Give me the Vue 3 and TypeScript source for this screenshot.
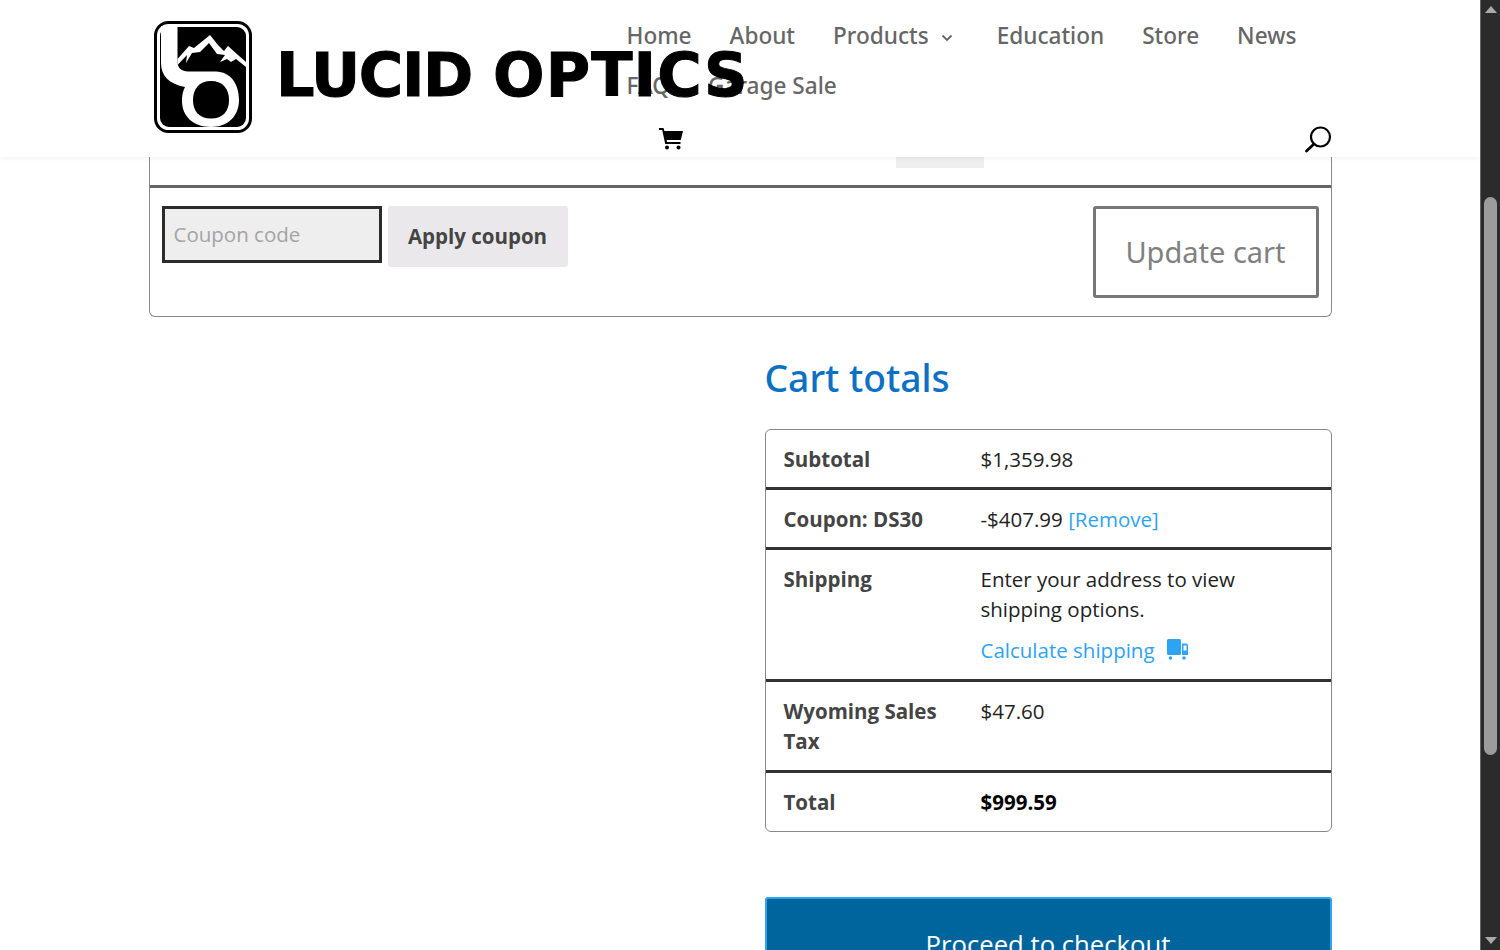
<script setup lang="ts">
const navRows = [
  [
    { label: 'Home', caret: false },
    { label: 'About', caret: false },
    { label: 'Products', caret: true },
    { label: 'Education', caret: false },
    { label: 'Store', caret: false },
    { label: 'News', caret: false },
  ],
  [
    { label: 'FAQ', caret: false },
    { label: 'Garage Sale', caret: false },
  ],
]
</script>

<template>
  <div class="page">
    <div class="viewport">
      <header class="site-header">
        <div class="header-inner">
          <div class="logo">
            <svg class="logo-mark" width="98" height="112" viewBox="0 0 98 112">
              <rect x="1.5" y="1.5" width="95" height="109" rx="13" fill="#fff" stroke="#000" stroke-width="3" />
              <rect x="6" y="6" width="86" height="100" rx="9" fill="#000" />
              <!-- stem running into the ring -->
              <path d="M7 5 H23.5 V41 C23.5 47 28 50.5 34 50.5 H62 C76 51 85 62 85 79 C85 95 74 106 57 106 C39 106 28 95 28 80 C28 73 29.5 69 31 66 C15 63 7 55 7 42 Z" fill="#fff" />
              <path d="M57 60 C69 60 75 68 75 79 C75 90 69 97.5 57 97.5 C45 97.5 39 90 39 79 C39 68 45 60 57 60 Z" fill="#000" />
              <!-- mountains -->
              <path d="M23.5 38 L35 25 L40 27 L56 14 L64 24 L70 30 L74 25 L84 34 L92 41 V46 L82 38 L77 41 L73 38 L66 41 L71 34 L63 33 L55 22 L46 31 L38 32 L32 42 L33 34 L23.5 44 Z" fill="#fff" />
            </svg>
            <span class="logo-text"><span class="word-a">LUCID</span> <span class="word-b">OPTICS</span></span>
          </div>
          <nav class="nav">
            <ul v-for="(row, r) in navRows" :key="r" class="nav-row">
              <li v-for="item in row" :key="item.label" class="nav-item">
                {{ item.label }}
                <svg v-if="item.caret" class="caret" width="12" height="8" viewBox="0 0 12 8">
                  <path d="M1.5 1.5 L6 6 L10.5 1.5" fill="none" stroke="#666" stroke-width="1.8" />
                </svg>
              </li>
            </ul>
          </nav>
          <div class="tools">
            <svg class="cart-icon" width="24" height="22" viewBox="0 0 24 22">
              <path d="M0 0 H4.5 L5.4 3 H24 L21.8 12 H7.6 L8 14 H21.5 V16 H6.2 L3.2 2 H0 Z" fill="#000" />
              <circle cx="8" cy="19.6" r="2" fill="#000" />
              <circle cx="19.5" cy="19.6" r="2" fill="#000" />
            </svg>
            <svg class="search-icon" width="28" height="28" viewBox="0 0 28 28">
              <circle cx="16.5" cy="12" r="9.5" fill="none" stroke="#000" stroke-width="2.2" />
              <path d="M10 19 L2.5 26" fill="none" stroke="#000" stroke-width="2.8" stroke-linecap="round" />
            </svg>
          </div>
        </div>
      </header>

      <main class="content">
        <section class="cart-card">
          <div class="item-row"><div class="qty-stub"></div></div>
          <div class="actions-row">
            <div class="coupon">
              <div class="coupon-input">Coupon code</div>
              <button class="apply-btn">Apply coupon</button>
            </div>
            <button class="update-btn">Update cart</button>
          </div>
        </section>

        <section class="totals">
          <h2 class="totals-title">Cart totals</h2>
          <table class="totals-table">
            <tbody>
              <tr>
                <th>Subtotal</th>
                <td>$1,359.98</td>
              </tr>
              <tr>
                <th>Coupon: DS30</th>
                <td>-$407.99 <a class="link">[Remove]</a></td>
              </tr>
              <tr class="ship-row">
                <th>Shipping</th>
                <td>
                  <p class="ship-text">Enter your address to view shipping options.</p>
                  <a class="link calc">
                    Calculate shipping
                    <svg width="21" height="22" viewBox="0 0 21 22">
                      <rect x="0" y="0" width="14" height="16" rx="1.5" fill="#2ea3f2" />
                      <path d="M15 4.5 H19 Q21 4.5 21 6.5 V16 H15 Z M16.5 6.5 V11.5 H19.5 V6.5 Z" fill="#2ea3f2" fill-rule="evenodd" />
                      <circle cx="3.5" cy="19" r="1.8" fill="#2ea3f2" />
                      <circle cx="17" cy="19" r="1.8" fill="#2ea3f2" />
                    </svg>
                  </a>
                </td>
              </tr>
              <tr class="tax-row">
                <th>Wyoming Sales Tax</th>
                <td>$47.60</td>
              </tr>
              <tr class="total-row">
                <th>Total</th>
                <td><strong>$999.59</strong></td>
              </tr>
            </tbody>
          </table>
          <button class="checkout-btn">Proceed to checkout</button>
        </section>
      </main>
    </div>

    <aside class="scrollbar">
      <span class="arrow up"></span>
      <div class="track"><div class="thumb"></div></div>
      <span class="arrow down"></span>
    </aside>
  </div>
</template>

<style>
html,
body {
  margin: 0;
  height: 100%;
  overflow: hidden;
  background: #fff;
}
</style>

<style scoped>
.page {
  display: flex;
  height: 950px;
  overflow: hidden;
  font-family: 'Open Sans', 'Noto Sans', sans-serif;
  font-size: 20.5px;
  line-height: 30px;
  color: #222;
}
.viewport {
  position: relative;
  flex: 1;
  overflow: hidden;
}

/* header sits over the scrolled page */
.site-header {
  position: absolute;
  top: 0;
  left: 0;
  right: 0;
  z-index: 5;
  height: 157px;
  background: #fff;
  box-shadow: 0 1px 6px rgba(0, 0, 0, 0.06);
}
.header-inner {
  position: relative;
  width: 1183px;
  height: 100%;
  margin: 0 auto;
  padding-left: 478px;
  box-sizing: border-box;
}
.logo {
  position: absolute;
  left: 5px;
  top: 21px;
  z-index: 2;
  display: flex;
  align-items: center;
  gap: 24px;
}
.logo-text {
  display: inline-block;
  font-family: 'DejaVu Sans', sans-serif;
  font-weight: 700;
  font-size: 60px;
  line-height: 1;
  color: #000;
  white-space: nowrap;
  -webkit-text-stroke: 1px #000;
  transform-origin: left center;
  transform: scaleX(1.01);
  margin-top: -4px;
}
.word-a {
  letter-spacing: -1.4px;
}
.word-b {
  letter-spacing: 1.1px;
}
.nav {
  padding-top: 11px;
  font-family: 'Noto Sans', sans-serif;
  font-size: 22.6px;
  line-height: 50px;
  color: #666;
  font-weight: 500;
}
.nav-row {
  display: flex;
  gap: 38px;
  margin: 0;
  padding: 0;
  list-style: none;
}
.nav-item {
  display: flex;
  align-items: center;
  gap: 12px;
}
.caret {
  margin-top: 4px;
  margin-right: 6px;
}
.tools {
  display: flex;
  align-items: center;
  justify-content: space-between;
  margin-top: 14px;
  padding-left: 32px;
}

.content {
  width: 1183px;
  margin: 0 auto;
}
.cart-card {
  border: 1px solid #888;
  border-top: none;
  border-radius: 0 0 6px 6px;
}
.item-row {
  height: 185px;
  border-bottom: 3px solid #666;
  display: flex;
  align-items: flex-end;
  padding-left: 746px;
}
.qty-stub {
  width: 88px;
  height: 30px;
  margin-bottom: 17px;
  background: #eee;
}
.actions-row {
  display: flex;
  justify-content: space-between;
  align-items: flex-start;
  padding: 18px 12px 18px;
}
.coupon {
  display: flex;
  align-items: flex-start;
  gap: 6px;
}
.coupon-input {
  width: 220px;
  height: 57px;
  box-sizing: border-box;
  border: 3px solid #2b2b2b;
  background: #eee;
  padding-left: 9px;
  line-height: 50px;
  font-size: 20.5px;
  color: #a4a4a4;
}
.apply-btn {
  width: 180px;
  height: 61px;
  border: none;
  border-radius: 3px;
  background: #eae8ea;
  font-family: inherit;
  font-size: 20.5px;
  font-weight: 700;
  color: #444;
  padding: 0 0 2px;
}
.update-btn {
  width: 226px;
  height: 92px;
  border: 3px solid #777;
  border-radius: 3px;
  background: #fff;
  font-family: 'Noto Sans', sans-serif;
  font-size: 29px;
  color: #808080;
  padding: 0 0 2px;
}

.totals {
  width: 567px;
  margin-left: auto;
}
.totals-title {
  margin: 39px 0 29px;
  font-family: 'Noto Sans', sans-serif;
  font-size: 37.2px;
  line-height: 44px;
  font-weight: 500;
  color: #0c71c3;
}
.totals-table {
  width: 100%;
  border-collapse: separate;
  border-spacing: 0;
  border: 1px solid #888;
  border-radius: 6px;
}
.totals-table th,
.totals-table td {
  padding: 14px 18px 13px;
  text-align: left;
  vertical-align: top;
  border-bottom: 3px solid #333;
}
.totals-table .ship-row th,
.totals-table .ship-row td,
.totals-table .tax-row th,
.totals-table .tax-row td {
  padding-bottom: 14px;
}
.totals-table .total-row th,
.totals-table .total-row td {
  padding-bottom: 14px;
  border-bottom: none;
}
.totals-table th {
  width: 161px;
  font-weight: 700;
  color: #444;
}
.totals-table strong {
  color: #000;
}
.ship-text {
  margin: 0 0 11px;
}
.link {
  color: #2ea3f2;
}
.calc {
  display: flex;
  align-items: center;
  gap: 12px;
}
.checkout-btn {
  display: block;
  width: 100%;
  height: 100px;
  margin-top: 65px;
  border: 2px solid #2ea3f2;
  border-radius: 3px;
  background: #00659c;
  color: #fff;
  font-family: inherit;
  font-size: 25.7px;
  padding: 0 0 6px;
}

.scrollbar {
  width: 20px;
  flex: none;
  background: #2b2b2b;
  display: flex;
  flex-direction: column;
  align-items: center;
  border-left: 1px solid #666;
  box-sizing: border-box;
}
.track {
  flex: 1;
  width: 100%;
  padding-top: 178px;
  box-sizing: border-box;
}
.thumb {
  width: 13px;
  height: 558px;
  margin: 0 auto;
  border-radius: 7px;
  background: #9c9c9c;
}
.arrow {
  flex: none;
  width: 0;
  height: 0;
  margin: 6px 0;
  border-left: 6px solid transparent;
  border-right: 6px solid transparent;
}
.arrow.up {
  border-bottom: 7px solid #aaa;
}
.arrow.down {
  border-top: 7px solid #aaa;
}
</style>
